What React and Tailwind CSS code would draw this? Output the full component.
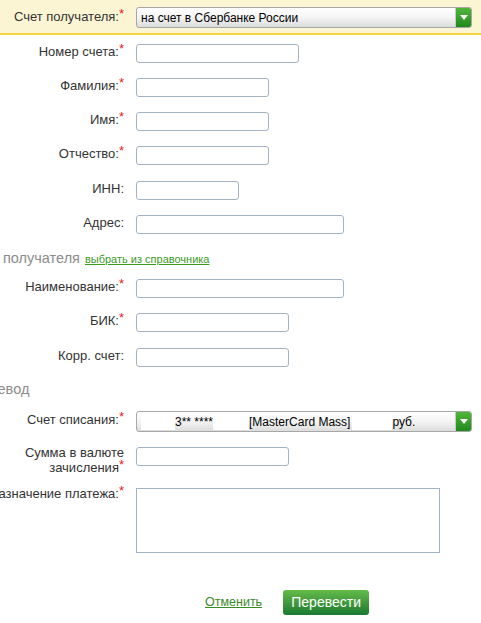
import React from 'react';

const font = { fontFamily: '"Liberation Sans", Arial, sans-serif' };

function Star() {
  return <span className="text-[#e8201b] relative -top-[3px] text-[13px]">*</span>;
}

function Label({ children, req, className = '' }) {
  return (
    <div className={`w-[124px] shrink-0 flex justify-end whitespace-nowrap text-[13px] leading-[16px] text-[#333] ${className}`}>
      <span>
        {children}
        {req && <Star />}
      </span>
    </div>
  );
}

function Input({ w }) {
  return (
    <div className={`${w} h-[19px] border border-[#a3b3c3] rounded-[3px] bg-white`} />
  );
}

function Row({ label, req, w, className = '' }) {
  return (
    <div className={`flex items-start gap-[12px] h-[34px] ${className}`}>
      <Label req={req}>{label}</Label>
      <Input w={w} />
    </div>
  );
}

function Select({ children }) {
  return (
    <div className="w-[336px] h-[21px] flex rounded-[3px] border border-[#a7a7a7] bg-gradient-to-b from-white via-[#f4f4f4] to-[#dcdcdc] overflow-hidden">
      <div className="flex-1 flex items-center px-[4px] text-[12px] text-black whitespace-nowrap overflow-hidden">{children}</div>
      <div className="w-[16px] flex items-center justify-center bg-gradient-to-b from-[#4fb63a] to-[#1f8a1c] border-l border-[#c8c8c8]">
        <svg width="8" height="5" viewBox="0 0 8 5"><path d="M0 0h8L4 5z" fill="#fff" /></svg>
      </div>
    </div>
  );
}

export default function App() {
  return (
    <div className="w-[481px] h-[623px] bg-white overflow-hidden" style={font}>
      <div className="h-[35px] bg-[#fcf5d3] border-b-2 border-[#f6d53f] flex items-start pt-[7px] gap-[12px]">
        <Label req className="pt-[2px]">Счет получателя:</Label>
        <Select>на счет в Сбербанке России</Select>
      </div>

      <div className="pt-[9px]">
        <Row label="Номер счета:" req w="w-[163px]" />
        <Row label="Фамилия:" req w="w-[133px]" />
        <Row label="Имя:" req w="w-[133px]" />
        <Row label="Отчество:" req w="w-[133px]" className="h-[35px]" />
        <Row label="ИНН:" w="w-[103px]" />
        <Row label="Адрес:" w="w-[208px]" />
      </div>

      <div className="flex items-baseline h-[30px] -mt-[3px] pt-[2px] -ml-[33px] whitespace-nowrap">
        <span className="text-[14.5px] text-[#8c8c8c]">Банк получателя</span>
        <span className="ml-[5px] text-[11px] text-[#3b9a1f] underline">выбрать из справочника</span>
      </div>

      <div className="pt-[3px]">
        <Row label="Наименование:" req w="w-[208px]" />
        <Row label="БИК:" req w="w-[153px]" className="h-[35px]" />
        <Row label="Корр. счет:" w="w-[153px]" />
      </div>

      <div className="h-[29px] -ml-[29px] -mt-[3px] text-[14.5px] text-[#8c8c8c] whitespace-nowrap">Перевод</div>

      <div className="flex items-start gap-[12px] h-[36px] mt-[3px]">
        <Label req className="pt-[1px]">Счет списания:</Label>
        <Select>
          <span className="w-[34px] h-[16px] bg-white shrink-0" />
          <span>3** ****</span>
          <span className="w-[36px] h-[16px] bg-white shrink-0" />
          <span>[MasterCard Mass]</span>
          <span className="w-[40px] h-[16px] bg-white shrink-0 ml-[2px]" />
          <span>руб.</span>
        </Select>
      </div>

      <div className="flex items-start gap-[12px] h-[41px]">
        <div className="w-[124px] shrink-0 text-right text-[13px] leading-[15px] text-[#333] -mt-[2px]">
          Сумма в валюте<br />зачисления<Star />
        </div>
        <Input w="w-[153px]" />
      </div>

      <div className="flex items-start gap-[12px]">
        <Label req className="-mt-[2px]">Назначение платежа:</Label>
        <div className="w-[304px] h-[65px] border border-[#a3b3c3] bg-white" />
      </div>

      <div className="flex items-center gap-[21px] pt-[37px] pl-[205px]">
        <span className="text-[12.5px] text-[#3b8a2a] underline">Отменить</span>
        <div className="h-[25px] w-[86px] rounded-[3px] bg-gradient-to-b from-[#64bb4a] to-[#187a32] flex items-center justify-center text-white text-[14px]">
          Перевести
        </div>
      </div>
    </div>
  );
}
